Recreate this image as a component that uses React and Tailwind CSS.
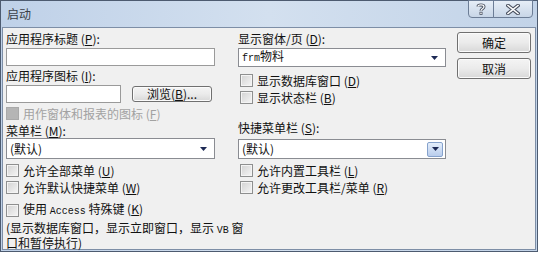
import React from "react";

const mono = "font-['Liberation_Mono',monospace] text-[10px]";

function Key({ k }) {
  return (
    <span>
      (<span className="underline">{k}</span>)
    </span>
  );
}

function Label({ children, className = "" }) {
  return (
    <div className={`h-[12px] whitespace-nowrap text-[12px] leading-[12px] ${className}`}>
      {children}
    </div>
  );
}

function Check({ children, disabled = false, className = "", boxClass = "" }) {
  return (
    <div className={`flex h-[13px] items-center gap-[4px] whitespace-nowrap ${className}`}>
      <span
        className={
          disabled
            ? `h-[13px] w-[13px] shrink-0 border border-[#a9a9a9] bg-[#b5b5b5] ${boxClass}`
            : `h-[13px] w-[13px] shrink-0 border border-[#8e8f8f] bg-gradient-to-br from-[#d2d2d2] to-[#f6f6f6] shadow-[inset_0_0_0_1px_#f4f4f4] ${boxClass}`
        }
      />
      <span className={`text-[12px] leading-[12px] ${disabled ? "text-[#a2a2a2]" : "text-[#111]"}`}>
        {children}
      </span>
    </div>
  );
}

function Arrow() {
  return (
    <svg width="7" height="4" viewBox="0 0 7 4">
      <path d="M0 0H7L3.5 4Z" fill="#1d2a55" />
    </svg>
  );
}

function Combo({ children, className = "", blue = false }) {
  return (
    <div
      className={`flex items-center justify-between border border-[#8a8c92] bg-white pl-[3px] pr-[2px] text-[12px] leading-[12px] ${className}`}
    >
      <span className="whitespace-nowrap">{children}</span>
      {blue ? (
        <span className="flex h-[15px] w-[16px] items-center justify-center rounded-[2px] border border-[#86a2cc] bg-gradient-to-b from-[#e4eefb] to-[#b9cdec]">
          <Arrow />
        </span>
      ) : (
        <span className="flex w-[16px] items-center justify-center pr-[2px]">
          <Arrow />
        </span>
      )}
    </div>
  );
}

function Button({ children, className = "" }) {
  return (
    <div
      className={`flex items-center justify-center rounded-[3px] border border-[#707070] bg-gradient-to-b from-[#f4f4f4] via-[#ebebeb] to-[#d8d8d8] text-[12px] leading-[12px] text-[#111] shadow-[inset_0_0_0_1px_#fbfbfb] ${className}`}
    >
      {children}
    </div>
  );
}

export default function App() {
  return (
    <div className="h-[254px] w-[540px] bg-white font-['Noto_Sans_CJK_SC',sans-serif] text-[#111]">
      <div className="flex h-[252px] w-[538px] flex-col border border-[#4d5b70] bg-gradient-to-r from-[#bfd1e8] via-[#d3e0ef] to-[#c2d3e8]">
        <div className="flex h-[26px] shrink-0 items-start">
          <span className="ml-[6px] mt-[7px] text-[12px] leading-[12px] text-[#3a3f48]">启动</span>
          <div className="-mt-[1px] ml-auto mr-[4px] flex">
            <span className="flex h-[18px] w-[26px] items-center justify-center rounded-bl-[4px] border border-[#6c7d96] bg-gradient-to-b from-[#e6eef7] to-[#c8d6e7]">
              <svg width="10" height="12" viewBox="0 0 10 12">
                <path d="M2 3.5C2 1.5 8 1.2 8 3.8C8 5.8 5 5.6 5 7.8" fill="none" stroke="#4a5160" strokeWidth="3" />
                <path d="M2 3.5C2 1.5 8 1.2 8 3.8C8 5.8 5 5.6 5 7.8" fill="none" stroke="#fff" strokeWidth="1.2" />
                <rect x="3.5" y="8.8" width="3" height="3" fill="#4a5160" />
                <rect x="4.3" y="9.6" width="1.4" height="1.4" fill="#fff" />
              </svg>
            </span>
            <span className="-ml-[1px] flex h-[18px] w-[40px] items-center justify-center rounded-br-[4px] border border-[#6c7d96] bg-gradient-to-b from-[#e6eef7] to-[#c8d6e7]">
              <svg width="14" height="11" viewBox="0 0 14 11">
                <path d="M2 1.5L12 9.5M12 1.5L2 9.5" stroke="#4a5160" strokeWidth="3.6" strokeLinecap="square" />
                <path d="M2 1.5L12 9.5M12 1.5L2 9.5" stroke="#fff" strokeWidth="1.6" strokeLinecap="square" />
              </svg>
            </span>
          </div>
        </div>

        <div className="mx-[1px] mb-[2px] flex-1 border border-[#7d8ea6] bg-[#f0f0f0]">
          <div className="flex pl-[3px] pt-[5px]">
            <div className="w-[209px]">
              <Label>
                应用程序标题 <Key k="P" />:
              </Label>
              <div className="mt-[3px] h-[18px] border border-[#9a9a9a] bg-white" />
              <Label className="mt-[4px]">
                应用程序图标 <Key k="I" />:
              </Label>
              <div className="mt-[3px] flex h-[18px] items-center">
                <div className="h-[18px] w-[115px] border border-[#9a9a9a] bg-white" />
                <Button className="ml-[11px] h-[16px] w-[80px]">
                  浏览 <Key k="B" />...
                </Button>
              </div>
              <Check disabled className="mt-[4px]">
                用作窗体和报表的图标 <Key k="F" />
              </Check>
              <Label className="mt-[5px]">
                菜单栏 <Key k="M" />:
              </Label>
              <Combo className="mt-[1px] h-[21px]">(默认)</Combo>
              <Check className="mt-[5px]">
                允许全部菜单 <Key k="U" />
              </Check>
              <Check className="mt-[4px]">
                允许默认快捷菜单 <Key k="W" />
              </Check>
            </div>

            <div className="ml-[23px] w-[208px]">
              <Label>
                显示窗体/页 <Key k="D" />:
              </Label>
              <Combo className="mt-[3px] h-[19px]">
                <span className={mono}>frm</span>物料
              </Combo>
              <Check className="mt-[7px] gap-[3px]" boxClass="ml-[2px] h-[12px] w-[12px]">
                显示数据库窗口 <Key k="D" />
              </Check>
              <Check className="mt-[4px] gap-[3px]" boxClass="ml-[2px] h-[12px] w-[12px]">
                显示状态栏 <Key k="B" />
              </Check>
              <Label className="mt-[18px]">
                快捷菜单栏 <Key k="S" />:
              </Label>
              <Combo blue className="mt-[5px] h-[20px]">
                (默认)
              </Combo>
              <Check className="mt-[5px] gap-[3px]" boxClass="ml-[2px] h-[12px] w-[12px]">
                允许内置工具栏 <Key k="L" />
              </Check>
              <Check className="mt-[4px] gap-[3px]" boxClass="ml-[2px] h-[12px] w-[12px]">
                允许更改工具栏/菜单 <Key k="R" />
              </Check>
            </div>

            <div className="-mt-[1px] ml-[11px] flex w-[74px] flex-col gap-[5px]">
              <Button className="h-[21px]">确定</Button>
              <Button className="h-[21px]">取消</Button>
            </div>
          </div>

          <div className="pl-[3px]">
            <Check className="mt-[10px]">
              使用 <span className={mono}>Access</span> 特殊键 <Key k="K" />
            </Check>
            <div className="mt-[5px] whitespace-nowrap text-[12px] leading-[12px]">
              (显示数据库窗口，显示立即窗口，显示 <span className={mono}>VB</span> 窗
              <br />
              口和暂停执行)
            </div>
          </div>
        </div>
      </div>
    </div>
  );
}
